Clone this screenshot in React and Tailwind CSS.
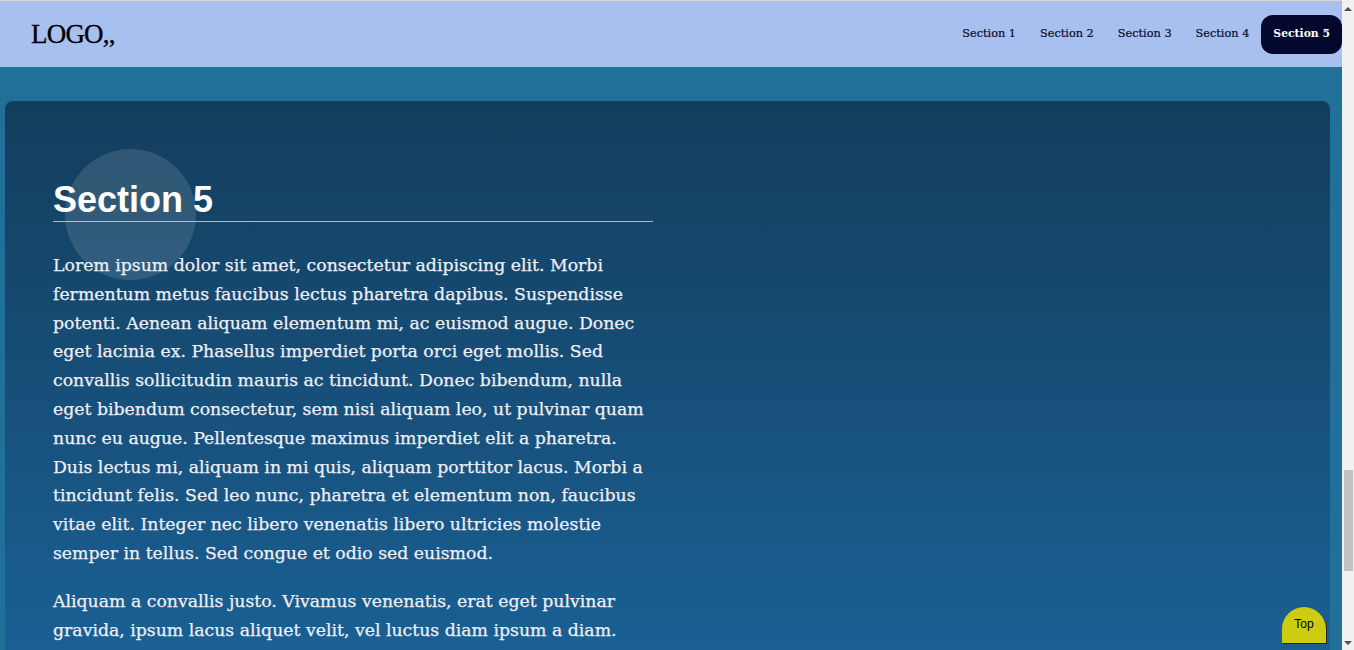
import React from 'react'

const navItems = ['Section 1', 'Section 2', 'Section 3', 'Section 4', 'Section 5']

const para1 = 'Lorem ipsum dolor sit amet, consectetur adipiscing elit. Morbi fermentum metus faucibus lectus pharetra dapibus. Suspendisse potenti. Aenean aliquam elementum mi, ac euismod augue. Donec eget lacinia ex. Phasellus imperdiet porta orci eget mollis. Sed convallis sollicitudin mauris ac tincidunt. Donec bibendum, nulla eget bibendum consectetur, sem nisi aliquam leo, ut pulvinar quam nunc eu augue. Pellentesque maximus imperdiet elit a pharetra. Duis lectus mi, aliquam in mi quis, aliquam porttitor lacus. Morbi a tincidunt felis. Sed leo nunc, pharetra et elementum non, faucibus vitae elit. Integer nec libero venenatis libero ultricies molestie semper in tellus. Sed congue et odio sed euismod.'

const para2 = 'Aliquam a convallis justo. Vivamus venenatis, erat eget pulvinar gravida, ipsum lacus aliquet velit, vel luctus diam ipsum a diam. Nullam tincidunt lorem quis est dignissim, et fermentum risus ultrices. Curabitur vitae nibh sit amet nisl volutpat.'

const serif = "font-['DejaVu_Serif',serif]"

function Scrollbar(){
  return (
    <div className="w-[12px] h-full bg-[#f1f1f1] flex flex-col items-center shrink-0">
      <div className="h-[17px] flex items-center justify-center">
        <div className="w-0 h-0 border-l-[4px] border-r-[4px] border-b-[4px] border-l-transparent border-r-transparent border-b-[#505050]" />
      </div>
      <div className="flex-1 w-full flex flex-col pl-[2px]">
        <div className="h-[453px]" />
        <div className="h-[101px] w-[9px] bg-[#c1c1c1]" />
      </div>
      <div className="h-[14px] flex items-center justify-center">
        <div className="w-0 h-0 border-l-[4px] border-r-[4px] border-t-[4px] border-l-transparent border-r-transparent border-t-[#505050]" />
      </div>
    </div>
  )
}

export default function App(){
  return (
    <div className="w-[1354px] h-[650px] overflow-hidden flex">
      <div className="flex-1 flex flex-col border-t border-[#d6d6d6] bg-[#21709a] relative">
        <header className="h-[66px] bg-[#a8c0f0] flex items-center justify-between pl-[31px] shrink-0">
          <div className="font-['Liberation_Serif',serif] text-[27px] text-black tracking-[-0.8px] [-webkit-text-stroke:0.3px_black]">LOGO,,</div>
          <nav className={`flex items-center ${serif} text-[11.3px]`}>
            {navItems.map((n, i) => (
              <a key={n} className={i === 4
                ? 'px-3 h-[39px] flex items-center rounded-[12px] bg-[#05082e] text-white font-bold text-[10.8px]'
                : 'px-3 h-[39px] flex items-center text-[#0a0a2a] [-webkit-text-stroke:0.2px_#0a0a2a]'}>
                {n}
              </a>
            ))}
          </nav>
        </header>

        <main className="flex-1 pt-[34px] pl-[5px] pr-[12px] overflow-hidden">
          <section className="h-[700px] rounded-t-[8px] bg-gradient-to-b from-[#133d5c] to-[#1b6aa4] px-[48px] pt-[48px] relative">
            <div className="absolute left-[60px] top-[48px] w-[131px] h-[131px] rounded-full bg-white/12" />
            <div className="w-[600px] relative">
              <h2 className="font-['Liberation_Sans',sans-serif] font-bold text-[36px] leading-[40px] text-white pt-[31px] pb-[1px] border-b border-[#9fc0d8]">
                Section 5
              </h2>
              <p className={`${serif} text-[17.3px] leading-[28.8px] text-[#f0eff5] [-webkit-text-stroke:0.25px_#f0eff5] mt-[29px]`}>{para1}</p>
              <p className={`${serif} text-[17.3px] leading-[28.8px] text-[#f0eff5] [-webkit-text-stroke:0.25px_#f0eff5] mt-[19px]`}>{para2}</p>
            </div>
          </section>
        </main>

        <button className="absolute right-[16px] top-[606px] w-[44px] h-[36px] bg-[#cccc10] rounded-t-[22px] shadow-[1px_1px_0_#222] font-['Liberation_Sans',sans-serif] text-[12px] text-black pb-[2px]">
          Top
        </button>
      </div>
      <Scrollbar />
    </div>
  )
}
